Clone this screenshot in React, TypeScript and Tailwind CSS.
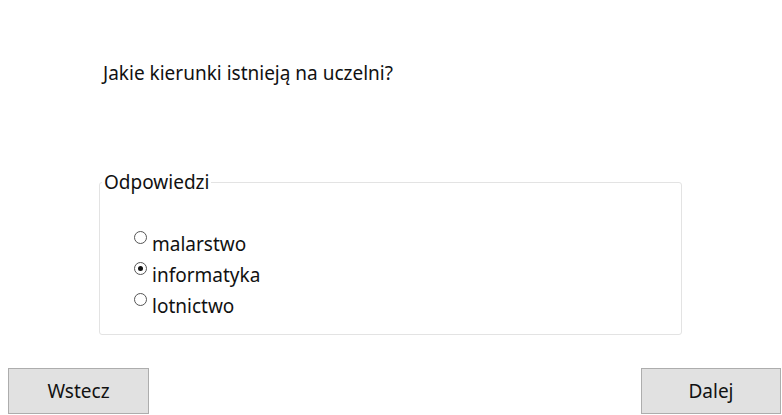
import React from "react";

const font = { fontFamily: '"Noto Sans", "Open Sans", sans-serif' };

function Radio({ label, checked }: { label: string; checked?: boolean }) {
  return (
    <div className="flex items-start h-[31px]">
      <span className="mt-[1px] w-[13px] h-[13px] rounded-full border border-[#555] bg-white flex items-center justify-center shrink-0">
        {checked && <span className="w-[5px] h-[5px] rounded-full bg-[#111]" />}
      </span>
      <span className="ml-[5px] text-[19px] leading-[24px] text-[#111] mt-[2px]">{label}</span>
    </div>
  );
}

export default function App() {
  return (
    <div className="w-[782px] h-[415px] bg-white flex flex-col text-black" style={font}>
      <div className="pl-[103px] pt-[61px] text-[19px] leading-[24px] text-[#111]">
        Jakie kierunki istnieją na uczelni?
      </div>
      <fieldset className="ml-[99px] mt-[85px] w-[583px] h-[165px] border border-[#e3e3e3] rounded-[3px]">
        <legend className="ml-[2px] px-[2px] text-[19px] leading-[24px] text-[#111]">Odpowiedzi</legend>
        <div className="pl-[34px] pt-[36px]">
          <Radio label="malarstwo" />
          <Radio label="informatyka" checked />
          <Radio label="lotnictwo" />
        </div>
      </fieldset>
      <div className="flex justify-between pl-[8px] pr-[1px] mt-[33px]">
        <button className="w-[141px] h-[46px] bg-[#e1e1e1] border border-[#adadad] text-[19px] text-[#111]">Wstecz</button>
        <button className="w-[140px] h-[46px] bg-[#e1e1e1] border border-[#adadad] text-[19px] text-[#111]">Dalej</button>
      </div>
    </div>
  );
}
